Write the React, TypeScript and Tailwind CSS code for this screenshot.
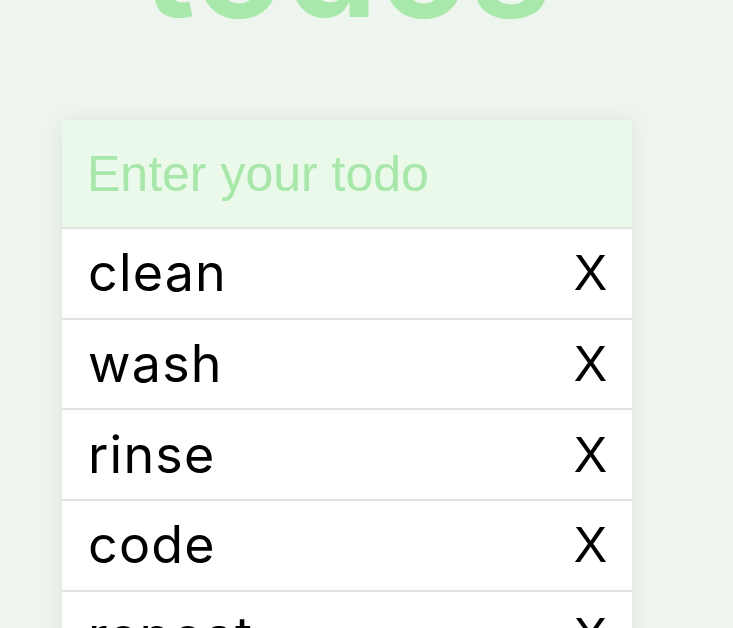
import React, { useState } from 'react';

const initialTodos = ['clean', 'wash', 'rinse', 'code', 'repeat'];

export default function App() {
  const [todos, setTodos] = useState<string[]>(initialTodos);
  const [value, setValue] = useState('');

  const addTodo = (e: React.FormEvent) => {
    e.preventDefault();
    if (!value.trim()) return;
    setTodos([...todos, value.trim()]);
    setValue('');
  };

  return (
    <div className="h-[628px] overflow-hidden bg-[#eef4ee]">
      <div className="ml-[62px] flex w-[570px] flex-col">
        <h1 className="-mt-[112px] h-[150px] text-center font-['Inter',sans-serif] text-[150px] font-semibold leading-none text-[#a8e9ab]">
          todos
        </h1>

        <div className="mt-[82px] bg-white shadow-[0_0_22px_rgba(0,0,0,0.07)]">
          <form onSubmit={addTodo}>
            <input
              value={value}
              onChange={(e) => setValue(e.target.value)}
              placeholder="Enter your todo"
              className="block h-[109px] w-full border-b-2 border-[#e2e4e2] bg-[#ebf9eb] pl-[25px] font-['Liberation_Sans',Arial,sans-serif] text-[50px] text-black outline-none placeholder:text-[#a7e7a9]"
            />
          </form>

          <ul>
            {todos.map((todo, i) => (
              <li
                key={i}
                className="flex h-[90.7px] items-center justify-between border-b-2 border-[#e3e3e3] pl-[26px] pr-[25px]"
              >
                <span className="font-['Inter',sans-serif] text-[52px] leading-none tracking-[1.2px] text-black">
                  {todo}
                </span>
                <button
                  onClick={() => setTodos(todos.filter((_, j) => j !== i))}
                  className="font-['Liberation_Sans',Arial,sans-serif] text-[50px] leading-none text-black"
                >
                  X
                </button>
              </li>
            ))}
          </ul>
        </div>
      </div>
    </div>
  );
}
